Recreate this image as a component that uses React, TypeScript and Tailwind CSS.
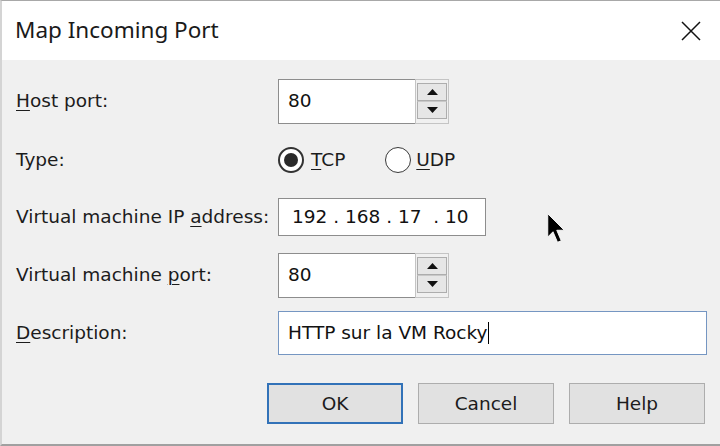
import React from "react";

const lbl = "font-['DejaVu_Sans',sans-serif] text-[18.5px] text-[#1c1c1c] leading-none";
const U = ({ children }: { children: React.ReactNode }) => (
  <span className="underline underline-offset-[3px] decoration-1">{children}</span>
);

function Tri({ up }: { up?: boolean }) {
  return (
    <svg width="11" height="6" viewBox="0 0 11 6">
      {up ? <polygon points="0,6 11,6 5.5,0" fill="#111" /> : <polygon points="0,0 11,0 5.5,6" fill="#111" />}
    </svg>
  );
}

function Spin({ value }: { value: string }) {
  return (
    <div className="flex h-[45px] w-[171px]">
      <div className={`flex-1 bg-white border border-[#8d8d8d] border-r-0 flex items-center pl-[9px] ${lbl} text-[#111]`}>
        {value}
      </div>
      <div className="w-[34px] border border-[#c4c4c4] bg-[#f0f0f0] flex flex-col px-[1px] pt-[3px] pb-[4px]">
        <div className="flex-1 bg-[#e6e6e6] border border-[#adadad] flex items-center justify-center">
          <Tri up />
        </div>
        <div className="flex-1 bg-[#e6e6e6] border border-[#adadad] border-t-[#c8c8c8] flex items-center justify-center">
          <Tri />
        </div>
      </div>
    </div>
  );
}

function Row({ label, h, mt, children }: { label: React.ReactNode; h: string; mt: string; children: React.ReactNode }) {
  return (
    <div className={`flex items-center ${h} ${mt}`}>
      <div className={`w-[262px] ${lbl}`}>{label}</div>
      <div className="flex-1 flex items-center h-full">{children}</div>
    </div>
  );
}

export default function App() {
  return (
    <div className="relative w-[720px] h-[446px] overflow-hidden bg-[#f0f0f0] border-t border-t-[#a8a8a8] border-l-2 border-l-[#d4d4d4] border-b-2 border-b-[#a0a0a0] flex flex-col">
      <div className="h-[59px] bg-white flex items-center justify-between pl-[13px] pr-[19px] shrink-0">
        <span className="font-['Noto_Sans',sans-serif] text-[22.5px] text-[#1a1a1a] leading-none">Map Incoming Port</span>
        <svg width="20" height="20" viewBox="0 0 20 20">
          <path d="M1 1 L19 19 M19 1 L1 19" stroke="#111" strokeWidth="1.5" />
        </svg>
      </div>
      <div className="flex flex-col pl-[14px] pr-[13px]">
        <Row label={<><U>H</U>ost port:</>} h="h-[45px]" mt="mt-[19px]">
          <Spin value="80" />
        </Row>
        <Row label="Type:" h="h-[26px]" mt="mt-[23px]">
          <div className="flex items-center">
            <div className="w-[26px] h-[26px] rounded-full border-[2.5px] border-[#333] bg-white flex items-center justify-center">
              <div className="w-[14px] h-[14px] rounded-full bg-[#2a2a2a]" />
            </div>
            <span className={`${lbl} ml-[7px]`}><U>T</U>CP</span>
            <div className="w-[26px] h-[26px] rounded-full border-[1.5px] border-[#3a3a3a] bg-white ml-[40px]" />
            <span className={`${lbl} ml-[5px]`}><U>U</U>DP</span>
          </div>
        </Row>
        <Row label={<>Virtual machine IP <U>a</U>ddress:</>} h="h-[38px]" mt="mt-[25px]">
          <div className={`w-[208px] h-full bg-white border border-[#8d8d8d] flex items-center pl-[13px] ${lbl} text-[#111] whitespace-pre`}>
            {"192 . 168 . 17  . 10"}
          </div>
        </Row>
        <Row label={<>Virtual machine <U>p</U>ort:</>} h="h-[44px]" mt="mt-[17px]">
          <Spin value="80" />
        </Row>
        <Row label={<><U>D</U>escription:</>} h="h-[44px]" mt="mt-[14px]">
          <div className={`flex-1 h-full bg-white border border-[#7596c2] flex items-center pl-[9px] ${lbl} text-[#111]`}>
            HTTP sur la VM Rocky<span className="inline-block w-[1px] h-[22px] bg-black ml-[1px]" />
          </div>
        </Row>
      </div>
      <div className="flex justify-end gap-[15px] pr-[15px] mt-[28px]">
        {["OK", "Cancel", "Help"].map((t, i) => (
          <div
            key={t}
            className={`w-[136px] h-[41px] bg-[#e1e1e1] flex items-center justify-center pt-[2px] ${lbl} ${
              i === 0 ? "border-2 border-[#3272b8]" : "border border-[#adadad]"
            }`}
          >
            {t}
          </div>
        ))}
      </div>
      <svg className="absolute left-[545px] top-[212px]" width="18" height="30" viewBox="0 0 12 20">
        <polygon points="0.5,0.5 0.5,16 4,12.5 7,19.5 9.5,18.5 6.5,11.5 11.5,11.5" fill="#000" stroke="#fff" strokeWidth="0.6" />
      </svg>
    </div>
  );
}
